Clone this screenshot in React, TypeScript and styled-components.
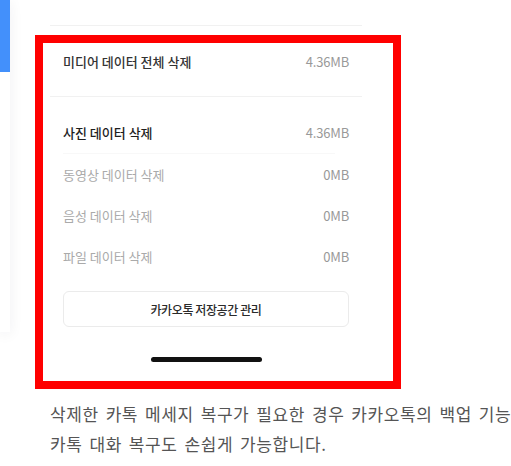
import React from 'react'
import styled, { createGlobalStyle } from 'styled-components'

const GlobalStyle = createGlobalStyle`
  html, body {
    margin: 0;
    padding: 0;
    width: 511px;
    height: 466px;
    overflow: hidden;
    background: #fff;
    font-family: 'Noto Sans CJK KR', 'Noto Sans', sans-serif;
  }
`

const Page = styled.div`
  display: flex;
  align-items: flex-start;
  width: 511px;
`

const SideCard = styled.div`
  flex: none;
  width: 10px;
  height: 332px;
  background: #fff;
  box-shadow: 0 2px 14px rgba(20, 30, 60, 0.07);
  display: flex;
  flex-direction: column;
`

const SideAccent = styled.div`
  height: 72px;
  background: #4390fb;
`

const Main = styled.div`
  flex: 1;
  display: flex;
  flex-direction: column;
  min-width: 0;
`

const Figure = styled.div`
  position: relative;
  padding: 0 0 19px 40px;
`

const RedFrame = styled.div`
  position: absolute;
  left: 25px;
  top: 35px;
  width: 350px;
  height: 338px;
  border: 8px solid #ff0000;
  pointer-events: none;
`

const Screen = styled.div`
  width: 312px;
  padding-top: 25px;
  padding-bottom: 8px;
  background: #fff;
  display: flex;
  flex-direction: column;
`

const Divider = styled.div<{ $inset?: boolean; $faint?: boolean }>`
  height: 1px;
  background: ${(p) => (p.$faint ? '#f8f8f8' : '#f1f1f1')};
  margin: ${(p) => (p.$inset ? '0 27px 0 13px' : '0')};
`

const Row = styled.div<{ $height: number }>`
  height: ${(p) => p.$height}px;
  padding: 0 13px;
  display: flex;
  align-items: center;
  justify-content: space-between;
`

const Label = styled.span<{ $tone: 'main' | 'strong' | 'muted' }>`
  font-size: 13px;
  letter-spacing: 0;
  color: ${(p) => (p.$tone === 'muted' ? '#aaaaaa' : p.$tone === 'strong' ? '#1e1e1e' : '#333')};
  font-weight: ${(p) => (p.$tone === 'muted' ? 400 : 500)};
`

const Value = styled.span`
  font-size: 13px;
  color: #999;
  letter-spacing: -0.2px;
`

const Group = styled.div`
  display: flex;
  flex-direction: column;
  padding-top: 15px;
`

const ManageButton = styled.button`
  margin: 14px 13px 0;
  height: 36px;
  border: 1px solid #ebebeb;
  border-radius: 6px;
  background: #fff;
  font-family: 'Noto Sans CJK KR', sans-serif;
  font-size: 12px;
  font-weight: 500;
  letter-spacing: -0.4px;
  color: #2a2a2a;
  padding: 0;
`

const HomeBar = styled.div`
  align-self: center;
  margin-top: 30px;
  width: 111px;
  height: 5px;
  border-radius: 3px;
  background: #111;
`

const Paragraph = styled.p`
  margin: 10px 0 0 40px;
  font-size: 17px;
  line-height: 30px;
  letter-spacing: 0.6px;
  word-spacing: 2.5px;
  color: #555;
  white-space: nowrap;
`

const items = [
  { label: '동영상 데이터 삭제', value: '0MB' },
  { label: '음성 데이터 삭제', value: '0MB' },
  { label: '파일 데이터 삭제', value: '0MB' },
]

const App = () => {
  return (
    <>
      <GlobalStyle />
      <Page>
        <SideCard>
          <SideAccent />
        </SideCard>
        <Main>
          <Figure>
            <Screen>
              <Divider />
              <Row $height={70}>
                <Label $tone="main">미디어 데이터 전체 삭제</Label>
                <Value>4.36MB</Value>
              </Row>
              <Divider />
              <Group>
                <Row $height={41}>
                  <Label $tone="strong">사진 데이터 삭제</Label>
                  <Value>4.36MB</Value>
                </Row>
                <Divider $inset $faint />
                {items.map((item) => (
                  <Row key={item.label} $height={41}>
                    <Label $tone="muted">{item.label}</Label>
                    <Value>{item.value}</Value>
                  </Row>
                ))}
              </Group>
              <ManageButton type="button">카카오톡 저장공간 관리</ManageButton>
              <HomeBar />
            </Screen>
            <RedFrame />
          </Figure>
          <Paragraph>
            삭제한 카톡 메세지 복구가 필요한 경우 카카오톡의 백업 기능
            <br />
            카톡 대화 복구도 손쉽게 가능합니다.
          </Paragraph>
        </Main>
      </Page>
    </>
  )
}

export default App
